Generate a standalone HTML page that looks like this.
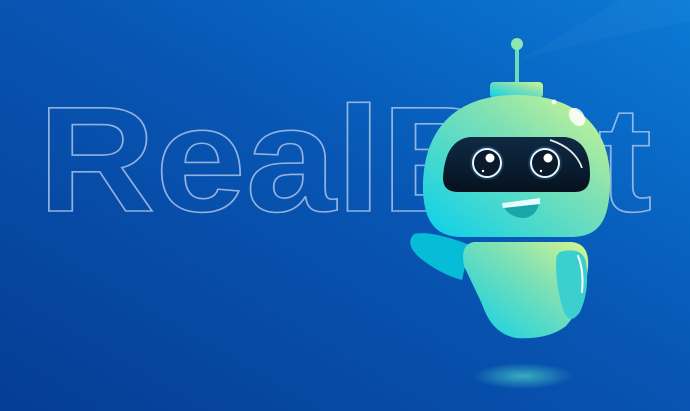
<!DOCTYPE html>
<html><head><style>
html,body{margin:0;padding:0;width:690px;height:411px;overflow:hidden}
</style></head><body>
<svg width="690" height="411" viewBox="0 0 690 411" xmlns="http://www.w3.org/2000/svg">
<defs>
<linearGradient id="bg" x1="0" y1="1" x2="1" y2="0">
<stop offset="0" stop-color="#053d94"/>
<stop offset="0.55" stop-color="#0856b4"/>
<stop offset="1" stop-color="#0a7ad6"/>
</linearGradient>
<linearGradient id="g" x1="0" y1="1" x2="1" y2="0">
<stop offset="0" stop-color="#08d0ec"/>
<stop offset="0.6" stop-color="#7fe0b4"/>
<stop offset="1" stop-color="#d4f78e"/>
</linearGradient>
<linearGradient id="vis" x1="0" y1="0" x2="0" y2="1">
<stop offset="0" stop-color="#0f2a44"/>
<stop offset="1" stop-color="#06121e"/>
</linearGradient>
<radialGradient id="sh">
<stop offset="0" stop-color="#4fd6c6" stop-opacity="0.7"/>
<stop offset="1" stop-color="#4fd6c6" stop-opacity="0"/>
</radialGradient>
</defs>
<rect width="690" height="411" fill="url(#bg)"/>
<path d="M520 60 Q610 35 690 22 L690 0 L620 0 Z" fill="#ffffff" opacity="0.03"/>
<text x="38" y="211" font-family="Liberation Sans, sans-serif" font-weight="bold" font-size="150" textLength="614" lengthAdjust="spacingAndGlyphs" fill="none" stroke="#b4cbee" stroke-opacity="0.8" stroke-width="1.6">RealBot</text>
<ellipse cx="523" cy="376" rx="50" ry="13" fill="url(#sh)"/>
<!-- left arm -->
<path d="M414 234 Q430 230 470 245 L462 280 Q440 274 420 258 Q404 244 414 234 Z" fill="#07bcd6"/>
<!-- body -->
<path d="M474 242 L572 242 Q590 244 588 268 Q584 306 566 326 Q548 340 516 338 Q492 334 482 304 L464 266 Q460 244 474 242 Z" fill="url(#g)"/>
<!-- right arm -->
<path d="M560 252 Q582 246 586 262 Q590 290 580 312 Q570 326 564 312 Q556 290 556 262 Q556 254 560 252 Z" fill="#3ccfcf"/>
<path d="M578 256 Q584 270 582 292" stroke="#fff" stroke-width="2" fill="none" stroke-linecap="round"/>
<!-- antenna -->
<rect x="515" y="46" width="4" height="40" fill="#6fdcb8"/>
<circle cx="517" cy="44" r="6" fill="#8fe5b0"/>
<rect x="490" y="82" width="53" height="16" rx="4" fill="url(#g)"/>
<!-- head -->
<path d="M516 95 C580 95 612 130 610 185 C609 225 596 237 570 237 L462 237 C436 237 424 222 423 190 C422 130 455 95 516 95 Z" fill="url(#g)"/>
<ellipse cx="577" cy="117" rx="7" ry="10" fill="#fff" opacity="0.85" transform="rotate(-35 577 117)"/>
<circle cx="554" cy="102" r="2.5" fill="#fff" opacity="0.9"/>
<!-- visor -->
<path d="M470 137 L565 137 Q590 140 590 175 Q590 192 575 192 L458 192 Q443 192 443 178 Q445 140 470 137 Z" fill="url(#vis)"/>
<path d="M550 140 Q575 148 582 168" stroke="#fff" stroke-width="1.8" fill="none" opacity="0.9"/>
<circle cx="487" cy="163" r="17" fill="#3a8fd0" opacity="0.25"/>
<circle cx="545" cy="163" r="17" fill="#3a8fd0" opacity="0.25"/>
<circle cx="487" cy="163" r="14" fill="#0b1a2a" stroke="#e8f6ff" stroke-width="2"/>
<circle cx="545" cy="163" r="14" fill="#0b1a2a" stroke="#e8f6ff" stroke-width="2"/>
<circle cx="490" cy="158" r="4.5" fill="#fff"/>
<circle cx="548" cy="158" r="4.5" fill="#fff"/>
<circle cx="483" cy="171" r="1.2" fill="#fff"/>
<circle cx="541" cy="171" r="1.2" fill="#fff"/>
<!-- mouth -->
<path d="M502 203 L540 198 Q538 218 522 218 Q506 216 502 203 Z" fill="#1aa7a8"/>
<path d="M502 203 L540 198 L540 204 L503 208 Z" fill="#e8fdff"/>
</svg>
</body></html>
